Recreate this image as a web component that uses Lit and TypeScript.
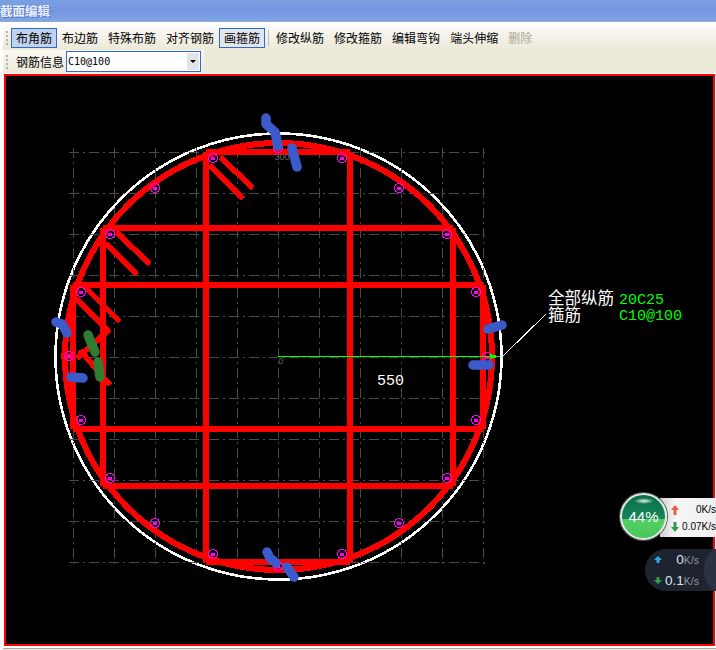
import { LitElement, html, css, svg, unsafeCSS } from 'lit';
import { customElement } from 'lit/decorators.js';

const CJK = `"Noto Sans CJK SC", "Liberation Sans", sans-serif`;

const tools = [
    { label: '布角筋', kind: 'checked' },
    { label: '布边筋' },
    { label: '特殊布筋' },
    { label: '对齐钢筋' },
    { label: '画箍筋', kind: 'hover' },
    { sep: true },
    { label: '修改纵筋' },
    { label: '修改箍筋' },
    { label: '编辑弯钩' },
    { label: '端头伸缩' },
    { label: '删除', kind: 'disabled' },
];

// canvas coordinates below are page coordinates, the svg sits at the page origin
const gridX = [73, 114, 155, 196, 237, 278, 319, 360, 401, 442, 483];
const gridY = [152, 193, 234, 275, 316, 357, 398, 439, 480, 521, 562];

const stirrups = [
    [73, 285, 73, 429],
    [103, 228, 103, 486],
    [206, 152, 206, 562],
    [350, 152, 350, 562],
    [453, 228, 453, 486],
    [483, 285, 483, 429],
    [206, 152, 350, 152],
    [103, 228, 453, 228],
    [73, 285, 483, 285],
    [73, 429, 483, 429],
    [103, 486, 453, 486],
    [206, 562, 350, 562],
    // hooks
    [220, 157, 253, 188],
    [210, 165, 243, 199],
    [116, 232, 150, 264],
    [106, 243, 137, 275],
    [83, 285, 120, 322],
    [75, 298, 108, 330],
    [110, 329, 77, 358],
    [80, 350, 110, 385],
    [61, 356, 76, 356],
];

const bars = [
    [278, 148], [342, 158], [399, 188], [447, 234], [476, 292], [487, 357], [476, 420],
    [447, 478], [399, 523], [342, 554], [278, 566], [213, 554], [155, 523], [110, 478],
    [81, 420], [69, 356], [81, 292], [110, 234], [155, 188], [213, 158],
];

const bluePaths = [
    'M266 118 L266 124 L275 132 L278 146',
    'M292 148 L297 167',
    'M267 552 L270 558 L276 563',
    'M287 567 L294 577',
    'M56 322 L62 324 L67 333',
    'M71 377 L83 378',
    'M488 329 L502 325',
    'M473 365 L489 365',
];

const greenPaths = ['M88 335 L95 352', 'M98 362 L100 377'];

@customElement('app-root')
export class AppRoot extends LitElement {
    static styles = css`
        :host {
            display: block;
            width: 716px;
            height: 650px;
            background: #fff;
            overflow: hidden;
            font-family: ${unsafeCSS(CJK)};
            font-size: 12px;
            color: #000;
        }

        .title {
            height: 21px;
            background: linear-gradient(#7ba0e0, #7595e2 50%, #7ea6ea);
            border-bottom: 1px solid #9ab;
            color: #e8effa;
            font-weight: 700;
            font-size: 12.5px;
            line-height: 21px;
            white-space: nowrap;
            text-shadow: 1px 1px 0 #5a78c0;
        }

        .bars {
            margin: 4px 0 0 3px;
            height: 47px;
            background: #ece9d8;
            display: flex;
            flex-direction: column;
        }

        .row {
            height: 23px;
            display: flex;
            align-items: center;
            padding-left: 3px;
        }

        .row.top {
            height: 24px;
            background: linear-gradient(#fbfaf6, #f4f2ea 40%, #ece9d8);
        }

        .row.info {
            width: 198px;
            background: linear-gradient(#f8f7f1, #ece9d8);
        }

        .grip {
            width: 2px;
            height: 14px;
            margin-right: 3px;
            background: repeating-linear-gradient(#b5b29f 0 2px, transparent 2px 4px);
        }

        .btn {
            box-sizing: border-box;
            height: 20px;
            padding: 0 4px;
            border: 1px solid transparent;
            line-height: 18px;
            white-space: nowrap;
        }

        .btn.checked {
            background: #c1d2ee;
            border-color: #316ac5;
        }

        .btn.hover {
            background: #e1e6ee;
            border-color: #316ac5;
        }

        .btn.disabled {
            color: #aca899;
        }

        .sep {
            width: 1px;
            height: 16px;
            margin: 0 2px 0 3px;
            background: #c5c2b8;
        }

        .label {
            margin: 0 2px 0 5px;
            white-space: nowrap;
        }

        .combo {
            flex: none;
            box-sizing: border-box;
            width: 135px;
            height: 21px;
            border: 1px solid #316ac5;
            background: #fff;
            display: flex;
            align-items: center;
            justify-content: space-between;
            padding: 1px 1px 1px 1px;
            font-family: 'DejaVu Sans Mono', monospace;
            font-size: 10px;
        }

        .arrow {
            width: 12px;
            height: 17px;
            background: #e0e3e8;
            display: flex;
            align-items: center;
            justify-content: center;
        }

        .arrow i {
            border: 3px solid transparent;
            border-top: 3px solid #000;
            border-bottom: 0;
        }

        .canvas {
            position: absolute;
            left: 0;
            top: 0;
        }

        .stage {
            position: relative;
            width: 716px;
            height: 650px;
            margin-top: -73px;
        }

        .speed {
            position: absolute;
            left: 620px;
            top: 493px;
            width: 96px;
            height: 47px;
        }

        .speed .panel {
            position: absolute;
            left: 40px;
            top: 5px;
            width: 56px;
            height: 39px;
            background: linear-gradient(90deg, #cfcfcf, #f6f6f6 28%, #efefef);
            font: 10px 'Liberation Sans', sans-serif;
        }

        .speed .line {
            display: flex;
            align-items: center;
            justify-content: space-between;
            height: 17px;
            padding-left: 11px;
            white-space: nowrap;
            box-sizing: border-box;
        }

        .speed .line:first-child {
            margin-top: 3px;
        }

        .ball {
            position: absolute;
            left: 0;
            top: 0;
            box-sizing: border-box;
            width: 47px;
            height: 47px;
            border-radius: 50%;
            border: 2px solid #e4ebe6;
            background: linear-gradient(#0b6f46, #14855a 55%, #52d064 55%, #49c75d);
            box-shadow: 0 0 0 1px #555;
            color: #fff;
            font: 15px/43px 'Liberation Sans', sans-serif;
            text-align: center;
            overflow: hidden;
        }

        .ball::before {
            content: '';
            position: absolute;
            left: 12px;
            top: 3px;
            width: 20px;
            height: 6px;
            border-radius: 50%;
            background: radial-gradient(closest-side, #e6f5ec, transparent);
        }

        .net {
            position: absolute;
            left: 645px;
            top: 549px;
            width: 80px;
            height: 42px;
            border-radius: 21px 0 0 21px;
            background: linear-gradient(#1d2430, #1d2430 49%, #2c3340 49%, #2c3340 51%, #1d2430 51%);
            font: 11px 'Liberation Sans', sans-serif;
            color: #dfe4ea;
            overflow: hidden;
        }

        .net .knob {
            position: absolute;
            left: 59px;
            top: -3px;
            width: 40px;
            height: 48px;
            border-radius: 50%;
            background: #2b3240;
        }

        .net .line {
            position: absolute;
            left: 9px;
            height: 21px;
            line-height: 21px;
            width: 45px;
            display: flex;
            align-items: center;
            white-space: nowrap;
        }

        .net .val {
            margin-left: auto;
            font-size: 13.5px;
        }

        .net small {
            color: #8d95a0;
            font-size: 10.5px;
        }
    `;

    renderGrid() {
        return svg`<g stroke="#4a4a4a" stroke-width="1" stroke-dasharray="10 4 2 4">
            ${gridX.map((x) => svg`<line x1=${x} y1="148" x2=${x} y2="566"></line>`)}
            ${gridY.map((y) => svg`<line x1="69" y1=${y} x2="487" y2=${y}></line>`)}
        </g>`;
    }

    renderDrawing() {
        return svg`
            <g shape-rendering="crispEdges">
                <circle cx="278.5" cy="356.5" r="223" fill="none" stroke="#fff" stroke-width="2.6"></circle>
                ${this.renderGrid()}
                <g stroke="#f00" stroke-width="5.6">
                    ${stirrups.map(([a, b, c, d]) => svg`<line x1=${a} y1=${b} x2=${c} y2=${d}></line>`)}
                </g>
                <circle cx="278.5" cy="356.5" r="213.5" fill="none" stroke="#f00" stroke-width="6"></circle>
                <g fill="none" stroke="#f0f" stroke-width="1.3">
                    ${bars.map(([x, y]) => svg`<circle cx=${x} cy=${y} r="4.5"></circle>
                        <rect x=${x - 2} y=${y - 1.5} width="4" height="3" fill="#f0f" stroke="none"></rect>`)}
                </g>
                <line x1="278" y1="356.5" x2="500" y2="356.5" stroke="#0f0" stroke-width="1"></line>
                <path d="M490 354 L500 356.5 L490 359 Z" fill="#0f0"></path>
                <line x1="503" y1="356" x2="546" y2="314" stroke="#fff" stroke-width="1"></line>
            </g>
            <text x="282" y="160" fill="#666" font-size="9" font-family="Liberation Sans, sans-serif" text-anchor="middle">300</text>
            <text x="281" y="364" fill="#666" font-size="9" font-family="Liberation Sans, sans-serif" text-anchor="middle">0</text>
            <g fill="none" stroke-linecap="round" stroke-linejoin="round" stroke-width="9.5">
                ${bluePaths.map((d) => svg`<path d=${d} stroke="#3a5bc9"></path>`)}
                ${greenPaths.map((d) => svg`<path d=${d} stroke="#2f7d32"></path>`)}
            </g>
            <g font-family=${CJK} font-size="16.5" fill="#fff">
                <text x="548" y="304">全部纵筋</text>
                <text x="548" y="321">箍筋</text>
            </g>
            <g font-family="Liberation Mono, monospace" font-size="15" fill="#0f0">
                <text x="619" y="304">20C25</text>
                <text x="619" y="320">C10@100</text>
            </g>
            <text x="377" y="385" font-family="Liberation Mono, monospace" font-size="15" fill="#fff">550</text>
        `;
    }

    renderSpeed() {
        return html`
            <div class="speed">
                <div class="panel">
                    <div class="line">
                        <svg width="8" height="10" viewBox="0 0 8 10"><path d="M4 0 L8 5 H5.5 V10 H2.5 V5 H0 Z" fill="#e0604a"></path></svg>
                        <span>0K/s</span>
                    </div>
                    <div class="line">
                        <svg width="8" height="10" viewBox="0 0 8 10"><path d="M4 10 L8 5 H5.5 V0 H2.5 V5 H0 Z" fill="#2f9a5a"></path></svg>
                        <span>0.07K/s</span>
                    </div>
                </div>
                <div class="ball">44%</div>
            </div>
            <div class="net">
                <div class="knob"></div>
                <div class="line" style="top:0">
                    <svg width="8" height="7" viewBox="0 0 8 7"><path d="M4 0 L8 4 H5.5 V7 H2.5 V4 H0 Z" fill="#35a4e8"></path></svg>
                    <span class="val">0<small>K/s</small></span>
                </div>
                <div class="line" style="top:21px">
                    <svg width="8" height="7" viewBox="0 0 8 7"><path d="M4 7 L8 3 H5.5 V0 H2.5 V3 H0 Z" fill="#2ea043"></path></svg>
                    <span class="val">0.1<small>K/s</small></span>
                </div>
            </div>
        `;
    }

    render() {
        return html`
            <div class="title">截面编辑</div>
            <div class="bars">
                <div class="row top">
                    <span class="grip"></span>
                    ${tools.map((t) =>
                        t.sep
                            ? html`<span class="sep"></span>`
                            : html`<span class="btn ${t.kind ?? ''}">${t.label}</span>`
                    )}
                </div>
                <div class="row info">
                    <span class="grip"></span>
                    <span class="label">钢筋信息</span>
                    <div class="combo">
                        <span>C10@100</span>
                        <span class="arrow"><i></i></span>
                    </div>
                </div>
            </div>
            <div class="stage">
                <svg class="canvas" width="716" height="650" viewBox="0 0 716 650">
                    <rect x="5" y="75" width="709" height="570" fill="#000" stroke="#f00" stroke-width="2"></rect>
                    <rect x="3" y="648" width="713" height="1" fill="#aaa"></rect>
                    <rect x="3" y="649" width="713" height="1" fill="#ece9d8"></rect>
                    ${this.renderDrawing()}
                </svg>
                ${this.renderSpeed()}
            </div>
        `;
    }
}
